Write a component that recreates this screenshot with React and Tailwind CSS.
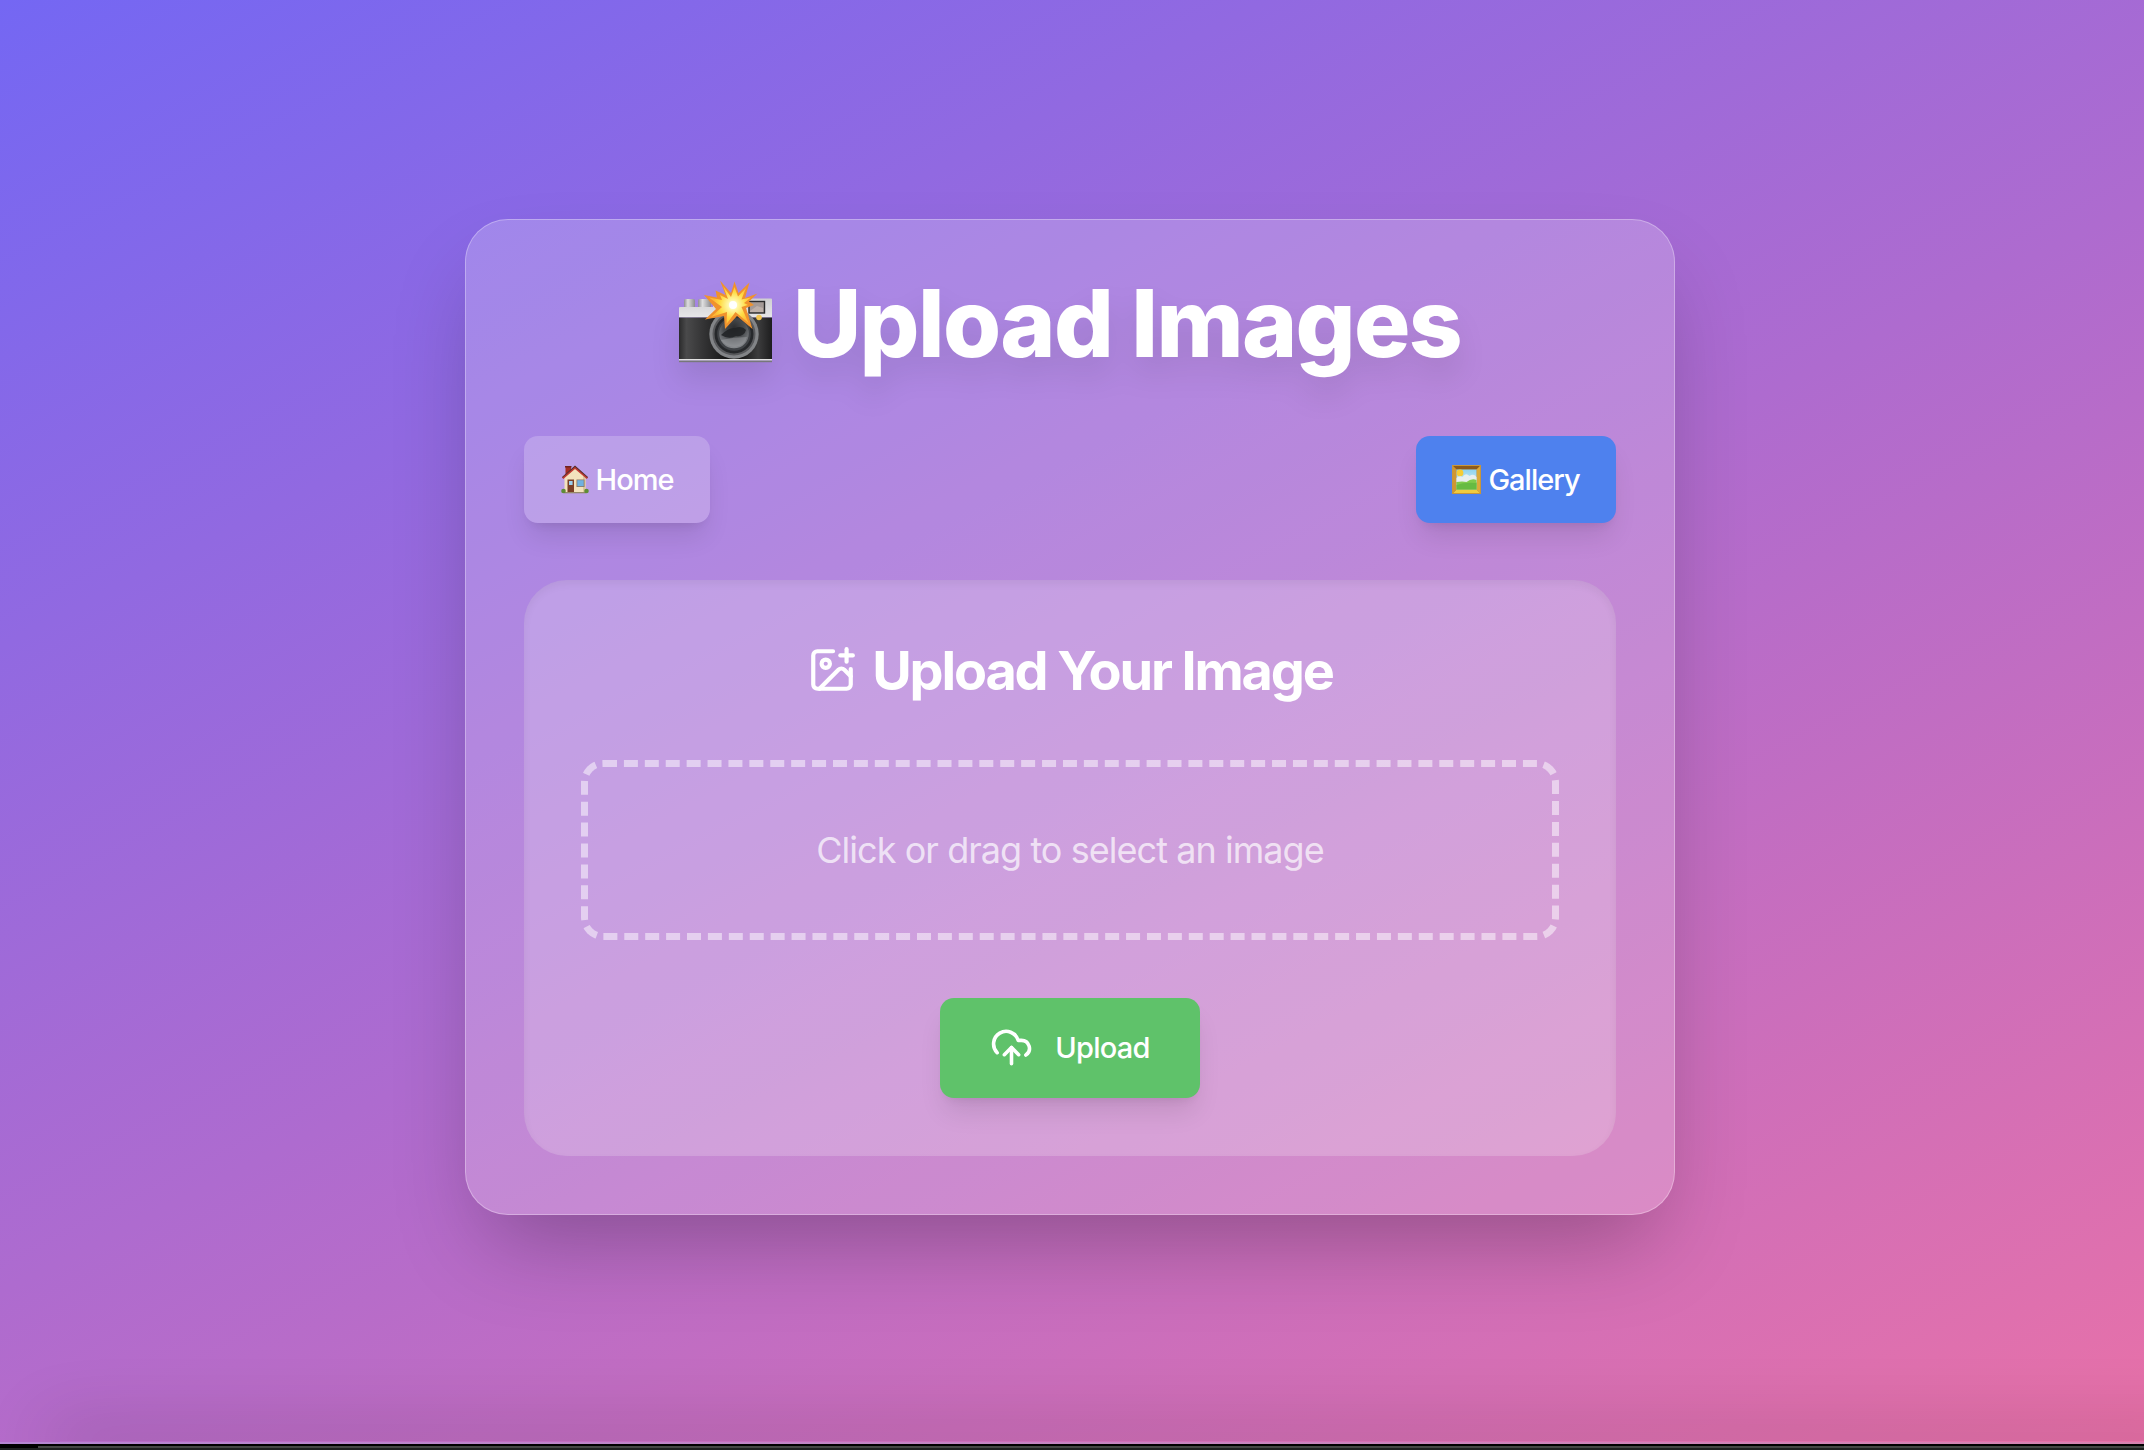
import { ImagePlus } from "lucide-react";

function CameraFlash({ className }) {
  return (
    <svg viewBox="0 0 94 82" className={className} aria-hidden="true">
      <defs>
        <linearGradient id="silver" x1="0" y1="0" x2="0" y2="1">
          <stop offset="0" stopColor="#cfcfd1" />
          <stop offset="1" stopColor="#e6e6e8" />
        </linearGradient>
        <linearGradient id="knob" x1="0" y1="0" x2="1" y2="0">
          <stop offset="0" stopColor="#8f8f92" />
          <stop offset="0.35" stopColor="#dededf" />
          <stop offset="1" stopColor="#8d8d90" />
        </linearGradient>
        <linearGradient id="leather" x1="0" y1="0" x2="1" y2="0">
          <stop offset="0" stopColor="#2a2a2b" />
          <stop offset="0.08" stopColor="#4a4a4b" />
          <stop offset="0.25" stopColor="#353536" />
          <stop offset="0.6" stopColor="#0c0c0c" />
          <stop offset="0.85" stopColor="#3c3c3d" />
          <stop offset="1" stopColor="#1d1d1e" />
        </linearGradient>
        <radialGradient id="lens" cx="0.5" cy="0.3" r="0.75">
          <stop offset="0" stopColor="#2c2d2f" />
          <stop offset="0.5" stopColor="#4c4f52" />
          <stop offset="1" stopColor="#929599" />
        </radialGradient>
        <radialGradient id="burst" gradientUnits="userSpaceOnUse" cx="54" cy="24" r="20">
          <stop offset="0" stopColor="#ffffff" />
          <stop offset="0.25" stopColor="#fff7a8" />
          <stop offset="0.65" stopColor="#ffdc45" />
          <stop offset="1" stopColor="#fdb935" />
        </radialGradient>
      </defs>
      <rect x="5" y="18" width="11" height="10" rx="1.5" fill="url(#knob)" />
      <rect x="19" y="18" width="13" height="10" rx="1.5" fill="url(#knob)" />
      <path d="M34 17.500h58q1 0 1 1v18H0V27q0-1 1-1h33z" fill="url(#silver)" />
      <rect x="0" y="36.500" width="93" height="42" fill="url(#leather)" />
      <rect x="0" y="78" width="93" height="1.6" fill="#e2e2e2" />
      <rect x="0" y="79.6" width="93" height="1.6" fill="#77777a" />
      <rect x="70" y="20.500" width="15.500" height="11.500" fill="#a49a97" stroke="#2b2b2c" strokeWidth="1.4" />
      <path d="M71 30l7-5 6 2v4H71z" fill="#bdb0aa" />
      <circle cx="80" cy="36.500" r="2.800" fill="#f3c552" />
      <circle cx="55" cy="53" r="24.700" fill="#828487" />
      <circle cx="55" cy="53" r="21.500" fill="#58595c" />
      <circle cx="55" cy="53" r="19.500" fill="#26282b" />
      <circle cx="55" cy="53" r="16.800" fill="#404347" />
      <circle cx="55" cy="52.500" r="14.800" fill="url(#lens)" />
      <path d="M42 54q8-8 14-7 7-3 11 2-2 7-10 6-7 4-15-1z" fill="#202224" opacity="0.85" />
      <path d="M42 59q13-3 26-3-2 9-12 10-9 0-14-7z" fill="#9da0a3" opacity="0.5" />
      <path d="M41 -0.500L52 12L55.500 0.500L59.500 12L70.500 1.500L66 17L78.500 12.500L70 20.500L75 24L67 27L73.500 48L58 35L46 48L45 35L26 38.500L37 28L25 14L38 16.500L36.500 9.500L46.500 14Z" fill="#f0922d" />
      <path d="M44 5L52 16L55.500 6L59 15.500L67 7L62.500 18.500L72 16.500L65 22L69 24L62.500 26L69.500 42L56.500 31L47.500 43L48 31L32 36L43 26L30 16.500L43 19L41 14L49 18Z" fill="url(#burst)" />
      <circle cx="54" cy="24" r="4" fill="#fff" />
    </svg>
  );
}

function House({ className }) {
  return (
    <svg viewBox="0 0 28 29" className={className} aria-hidden="true">
      <rect x="4.500" y="1" width="5.500" height="9" fill="#a32d25" />
      <path d="M4 1h6.500v1.500H4z" fill="#6f2320" />
      <path d="M3.500 12L14 3l10.500 9v15.500h-21z" fill="#f3e2bd" />
      <path d="M22 10l2.500 2v15.500H22z" fill="#dcc69d" />
      <path d="M14 1L1 12.500l1.300 1.500L14 4l11.800 10 1.200-1.500z" fill="#c23a32" />
      <path d="M14 .6L1 12l.5.700L14 2l12.500 10.700.5-.7z" fill="#55302e" />
      <rect x="6.500" y="14.500" width="6.500" height="13" fill="#7b3f27" />
      <rect x="8" y="16" width="3.600" height="4" fill="#9bd0ef" />
      <rect x="15.500" y="14.500" width="8" height="7.500" fill="#8b7762" />
      <rect x="16.300" y="15.200" width="6.400" height="6" fill="#6fb1e2" />
      <rect x="3" y="27" width="22" height="1.300" fill="#958969" />
      <circle cx="2.500" cy="26" r="2.300" fill="#5f8c35" />
      <circle cx="25.500" cy="26" r="2.300" fill="#5f8c35" />
    </svg>
  );
}

function FramedPicture({ className }) {
  return (
    <svg viewBox="0 0 29 29" className={className} aria-hidden="true">
      <defs>
        <linearGradient id="sky" x1="0" y1="0" x2="0" y2="1">
          <stop offset="0" stopColor="#8fd3ee" />
          <stop offset="1" stopColor="#e9f4f5" />
        </linearGradient>
      </defs>
      <rect width="29" height="29" fill="#a9772b" />
      <path d="M0 0h29l-4.500 4.500h-20z" fill="#8c5a1c" />
      <path d="M0 29h29l-4.500-4.500h-20z" fill="#f0cb3f" />
      <path d="M0 0l4.500 4.500v20L0 29z" fill="#cf9633" />
      <path d="M29 0l-4.500 4.500v20L29 29z" fill="#dba93a" />
      <rect x="0.500" y="0.500" width="28" height="28" fill="none" stroke="#c8963a" strokeWidth="1" />
      <rect x="4.500" y="4.500" width="20" height="20" fill="url(#sky)" />
      <circle cx="8" cy="8" r="3.400" fill="#f6cc35" />
      <path d="M4.500 13q3-3 6-1 3-5 7-1 4-3 7 1v5h-20z" fill="#e8eeee" />
      <path d="M4.500 17q6-1 10 0 5-4 10-2v9.500h-20z" fill="#7fcb4c" />
      <path d="M4.500 20q8-3 20-2v6.500h-20z" fill="#66bb42" />
    </svg>
  );
}

function CloudUpload({ className }) {
  return (
    <svg viewBox="0 0 24 24" fill="none" stroke="currentColor" strokeWidth="2" strokeLinecap="round" strokeLinejoin="round" className={className} aria-hidden="true">
      <path d="M4 14.899A7 7 0 1 1 15.710 8h1.790a4.500 4.500 0 0 1 2.500 8.242" />
      <path d="M12 12v9" />
      <path d="m16 16-4-4-4 4" />
    </svg>
  );
}

export default function App() {
  return (
    <div className="flex h-[1450px] w-full flex-col overflow-hidden bg-black font-['Inter',sans-serif] text-white">
      <div className="flex h-[1442px] shrink-0 flex-col items-center overflow-hidden bg-[linear-gradient(153deg,#7467f3,#ae6bcf_51%,#e871a8)]">
        <main className="mt-[219px] mr-[4px] h-[996px] w-[1210px] shrink-0 rounded-[43px] border border-white/30 bg-white/20 px-[58px] pt-[54px] shadow-[0_45px_90px_-22px_rgba(0,0,0,0.28)]">
          <h1 className="flex h-[97px] items-center justify-center text-[94px] leading-none font-extrabold tracking-[-1.650px] whitespace-nowrap drop-shadow-[0_18px_14px_rgba(0,0,0,0.09)]">
            <CameraFlash className="mr-[20px] mb-[2px] h-[82px] w-[94px] shrink-0" />
            Upload Images
          </h1>
          <nav className="mt-[65px] flex justify-between text-[29px] font-medium tracking-[-1px]">
            <button className="flex h-[87px] w-[186px] items-center justify-center rounded-[14px] bg-white/20 shadow-[0_18px_27px_-5px_rgba(0,0,0,0.1),0_7px_11px_-7px_rgba(0,0,0,0.1)]">
              <House className="mr-[7px] h-[29px] w-[28px]" />
              Home
            </button>
            <button className="flex h-[87px] w-[200px] items-center justify-center rounded-[14px] bg-[#4e81ee] shadow-[0_18px_27px_-5px_rgba(0,0,0,0.1),0_7px_11px_-7px_rgba(0,0,0,0.1)]">
              <FramedPicture className="mr-[7px] size-[29px]" />
              Gallery
            </button>
          </nav>
          <section className="mt-[57px] flex h-[576px] flex-col items-center rounded-[43px] bg-white/20 px-[57px] pt-[58px] shadow-[inset_0_4px_8px_rgba(0,0,0,0.05)]">
            <h2 className="flex h-[65px] items-center text-[54px] leading-none font-bold tracking-[-2.150px] whitespace-nowrap">
              <ImagePlus className="mr-[15px] mb-[2px] size-[50px]" />
              Upload Your Image
            </h2>
            <div className="mt-[57px] flex h-[180px] w-full items-center justify-center rounded-[22px] border-[7px] border-dashed border-white/50 text-[36px] tracking-[-0.950px] text-white/70">
              Click or drag to select an image
            </div>
            <button className="mt-[58px] flex h-[100px] w-[260px] items-center justify-center rounded-[14px] bg-[#5fc26a] text-[29px] font-medium tracking-[-0.700px] shadow-[0_18px_27px_-5px_rgba(0,0,0,0.1),0_7px_11px_-7px_rgba(0,0,0,0.1)]">
              <CloudUpload className="mr-[22px] mb-[2px] size-[43px]" />
              Upload
            </button>
          </section>
        </main>
        <div className="mt-auto ml-[60px] h-px w-full shrink-0 self-start shadow-[0_0_70px_14px_rgba(0,0,0,0.2)]" />
      </div>
      <div className="h-[2px] shrink-0 bg-linear-to-r from-[#b586d2] to-[#d583b0]" />
      <div className="h-[2px] shrink-0 bg-black" />
      <div className="ml-[38px] h-[2px] shrink-0 bg-[#454745]" />
      <div className="h-[2px] shrink-0 bg-[#1d201f]" />
    </div>
  );
}
